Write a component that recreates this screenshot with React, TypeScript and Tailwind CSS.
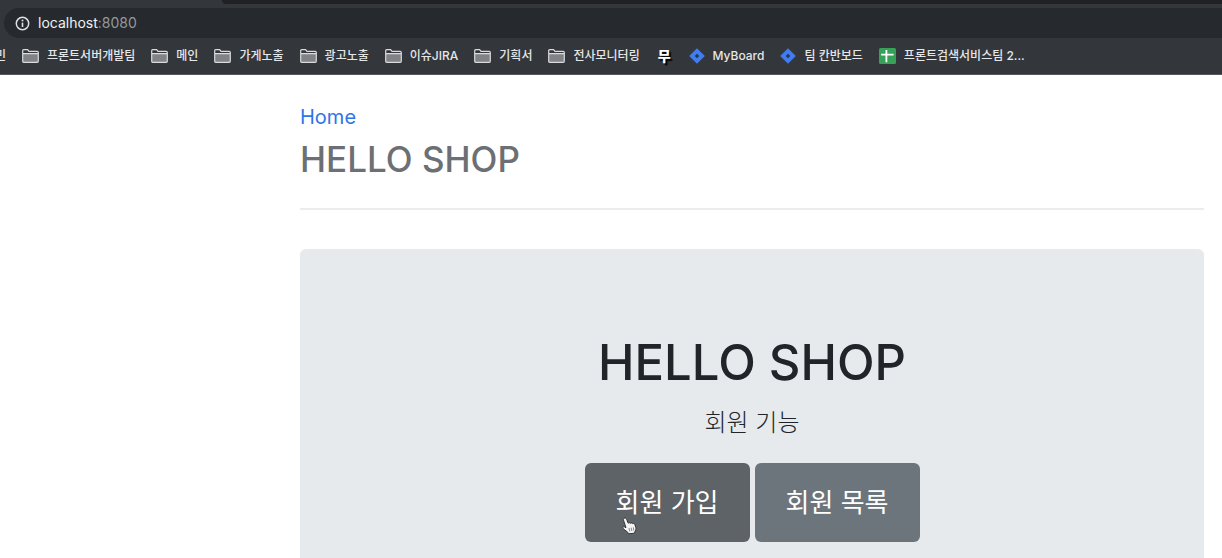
type Bookmark = {
  label: string
  icon: "folder" | "jira" | "sheet" | "woo"
}

const bookmarks: Bookmark[] = [
  { label: "프론트서버개발팀", icon: "folder" },
  { label: "메인", icon: "folder" },
  { label: "가게노출", icon: "folder" },
  { label: "광고노출", icon: "folder" },
  { label: "이슈JIRA", icon: "folder" },
  { label: "기획서", icon: "folder" },
  { label: "전사모니터링", icon: "folder" },
  { label: "무", icon: "woo" },
  { label: "MyBoard", icon: "jira" },
  { label: "팀 칸반보드", icon: "jira" },
  { label: "프론트검색서비스팀 2...", icon: "sheet" },
]

function FolderIcon() {
  return (
    <svg width="17" height="14" viewBox="0 0 17 14" className="shrink-0" aria-hidden="true">
      <path d="M0.7 12.3V1.7Q0.7 0.7 1.7 0.7H5.6L7 2.4H15.3Q16.3 2.4 16.3 3.4V12.3Q16.3 13.3 15.3 13.3H1.7Q0.7 13.3 0.7 12.3Z" fill="#34373b" />
      <path d="M1 4.8H16V13H1Z" fill="#808285" />
      <path d="M0.7 4.6H16.3M0.7 12.3V1.7Q0.7 0.7 1.7 0.7H5.6L7 2.4H15.3Q16.3 2.4 16.3 3.4V12.3Q16.3 13.3 15.3 13.3H1.7Q0.7 13.3 0.7 12.3Z" fill="none" stroke="#d9dbdd" strokeWidth="1.2" />
    </svg>
  )
}

function JiraIcon() {
  return (
    <svg width="16" height="16" viewBox="0 0 16 16" className="shrink-0" aria-hidden="true">
      <path d="M8 0.2L15.8 8L8 15.8L0.2 8Z" fill="#3f7df0" />
      <path d="M8 5.8L10.2 8L8 10.2L5.8 8Z" fill="#29354a" />
    </svg>
  )
}

function SheetIcon() {
  return (
    <svg width="17" height="16" viewBox="0 0 17 16" className="shrink-0" aria-hidden="true">
      <rect width="17" height="16" rx="1.5" fill="#35a159" />
      <path d="M2.2 6.6H14.6M7.4 2V14.2" stroke="#fff" strokeWidth="1.8" />
    </svg>
  )
}

function HandCursor() {
  return (
    <svg width="17" height="18" viewBox="0 0 17 18" aria-hidden="true">
      <path
        d="M3.2 1.3C4.2 0.7 5.2 1.2 5.6 2.2L7.2 6.2C7.9 5.5 8.9 5.7 9.4 6.3C10.2 5.7 11.2 5.9 11.6 6.6C12.6 6.1 13.5 6.5 13.8 7.4L14.8 10.5C15.2 12.2 14.7 13.6 13.8 14.7L13.6 16.2L7.4 16.8L6.9 15.4L2 11.6C1.3 10.9 2 9.5 3.3 9.8L5 10.7L2.5 3.2C2.2 2.4 2.5 1.6 3.2 1.3Z"
        fill="#f4f4f4"
        stroke="#33373a"
        strokeWidth="1"
        strokeLinejoin="round"
      />
      <path d="M8 11L8.8 14.4M10.2 10.7L10.9 14.1M12.3 10.3L12.9 13.6" stroke="#6a6e72" strokeWidth="0.8" />
    </svg>
  )
}

function BookmarkLink({ label, icon }: Bookmark) {
  if (icon === "woo") {
    return (
      <a href="#" className="px-0.5 text-sm font-black text-white [text-shadow:2px_2px_1px_#000]">
        {label}
      </a>
    )
  }
  return (
    <a href="#" className="flex shrink-0 items-center gap-2">
      {icon === "folder" && <FolderIcon />}
      {icon === "jira" && <JiraIcon />}
      {icon === "sheet" && <SheetIcon />}
      {label}
    </a>
  )
}

function BrowserBar() {
  return (
    <div className="overflow-hidden border-b border-[#55575a] bg-[#33363a]">
      {/* Tab strip */}
      <div className="h-1 pl-[222px]">
        <div className="h-full rounded-bl-md bg-[#1f2124]" />
      </div>
      <div className="pt-1 pl-1">
        <div className="flex h-[30px] items-center gap-2 rounded-l-full bg-[#26292d] pl-[11px] text-sm">
          <svg width="15" height="15" viewBox="0 0 15 15" fill="none" className="shrink-0" aria-hidden="true">
            <circle cx="7.5" cy="7.5" r="6.2" stroke="#dfe1e3" strokeWidth="1.5" />
            <path d="M7.5 6.6V11" stroke="#dfe1e3" strokeWidth="1.6" />
            <circle cx="7.5" cy="4.5" r="1" fill="#dfe1e3" />
          </svg>
          <p className="text-[#f0f1f2]">
            localhost<span className="text-[#96999c]">:8080</span>
          </p>
        </div>
      </div>
      <nav className="flex h-9 items-center gap-4 text-xs font-medium whitespace-nowrap text-[#e6e7e9]">
        <a href="#" className="flex w-1.5 shrink-0 justify-end">민</a>
        {bookmarks.map((bookmark) => (
          <BookmarkLink key={bookmark.label} {...bookmark} />
        ))}
      </nav>
    </div>
  )
}

export default function App() {
  return (
    <div className="flex min-h-screen flex-col bg-white font-['Inter','Noto_Sans_CJK_KR',sans-serif] text-[#212529]">
      <BrowserBar />
      <div className="flex grow flex-col pr-[18px] pl-[300px]">
        <header className="border-b-2 border-[#ececee] pt-6 pb-6">
          <a href="#" className="block text-xl leading-9 text-[#2f74e8]">Home</a>
          <h3 className="text-[35px] leading-[49px] font-medium text-[#6c6f73]">HELLO SHOP</h3>
        </header>

        <main className="mt-[39px] grow rounded-t-md bg-[#e6eaed] px-8 pt-20 text-center">
          <h1 className="text-[49px] leading-[68px] font-medium">HELLO SHOP</h1>
          <p className="mt-2 text-2xl leading-9 font-light">회원 기능</p>
          <div className="mt-[22px] flex justify-center gap-[5px] pb-4">
            <button className="relative h-[79px] w-[165px] rounded-md bg-[#5e6367] text-[26px] text-white">
              회원 가입
              <span className="absolute top-[54px] left-9">
                <HandCursor />
              </span>
            </button>
            <button className="h-[79px] w-[165px] rounded-md bg-[#6d757c] text-[26px] text-white">회원 목록</button>
          </div>
        </main>
      </div>
    </div>
  )
}
